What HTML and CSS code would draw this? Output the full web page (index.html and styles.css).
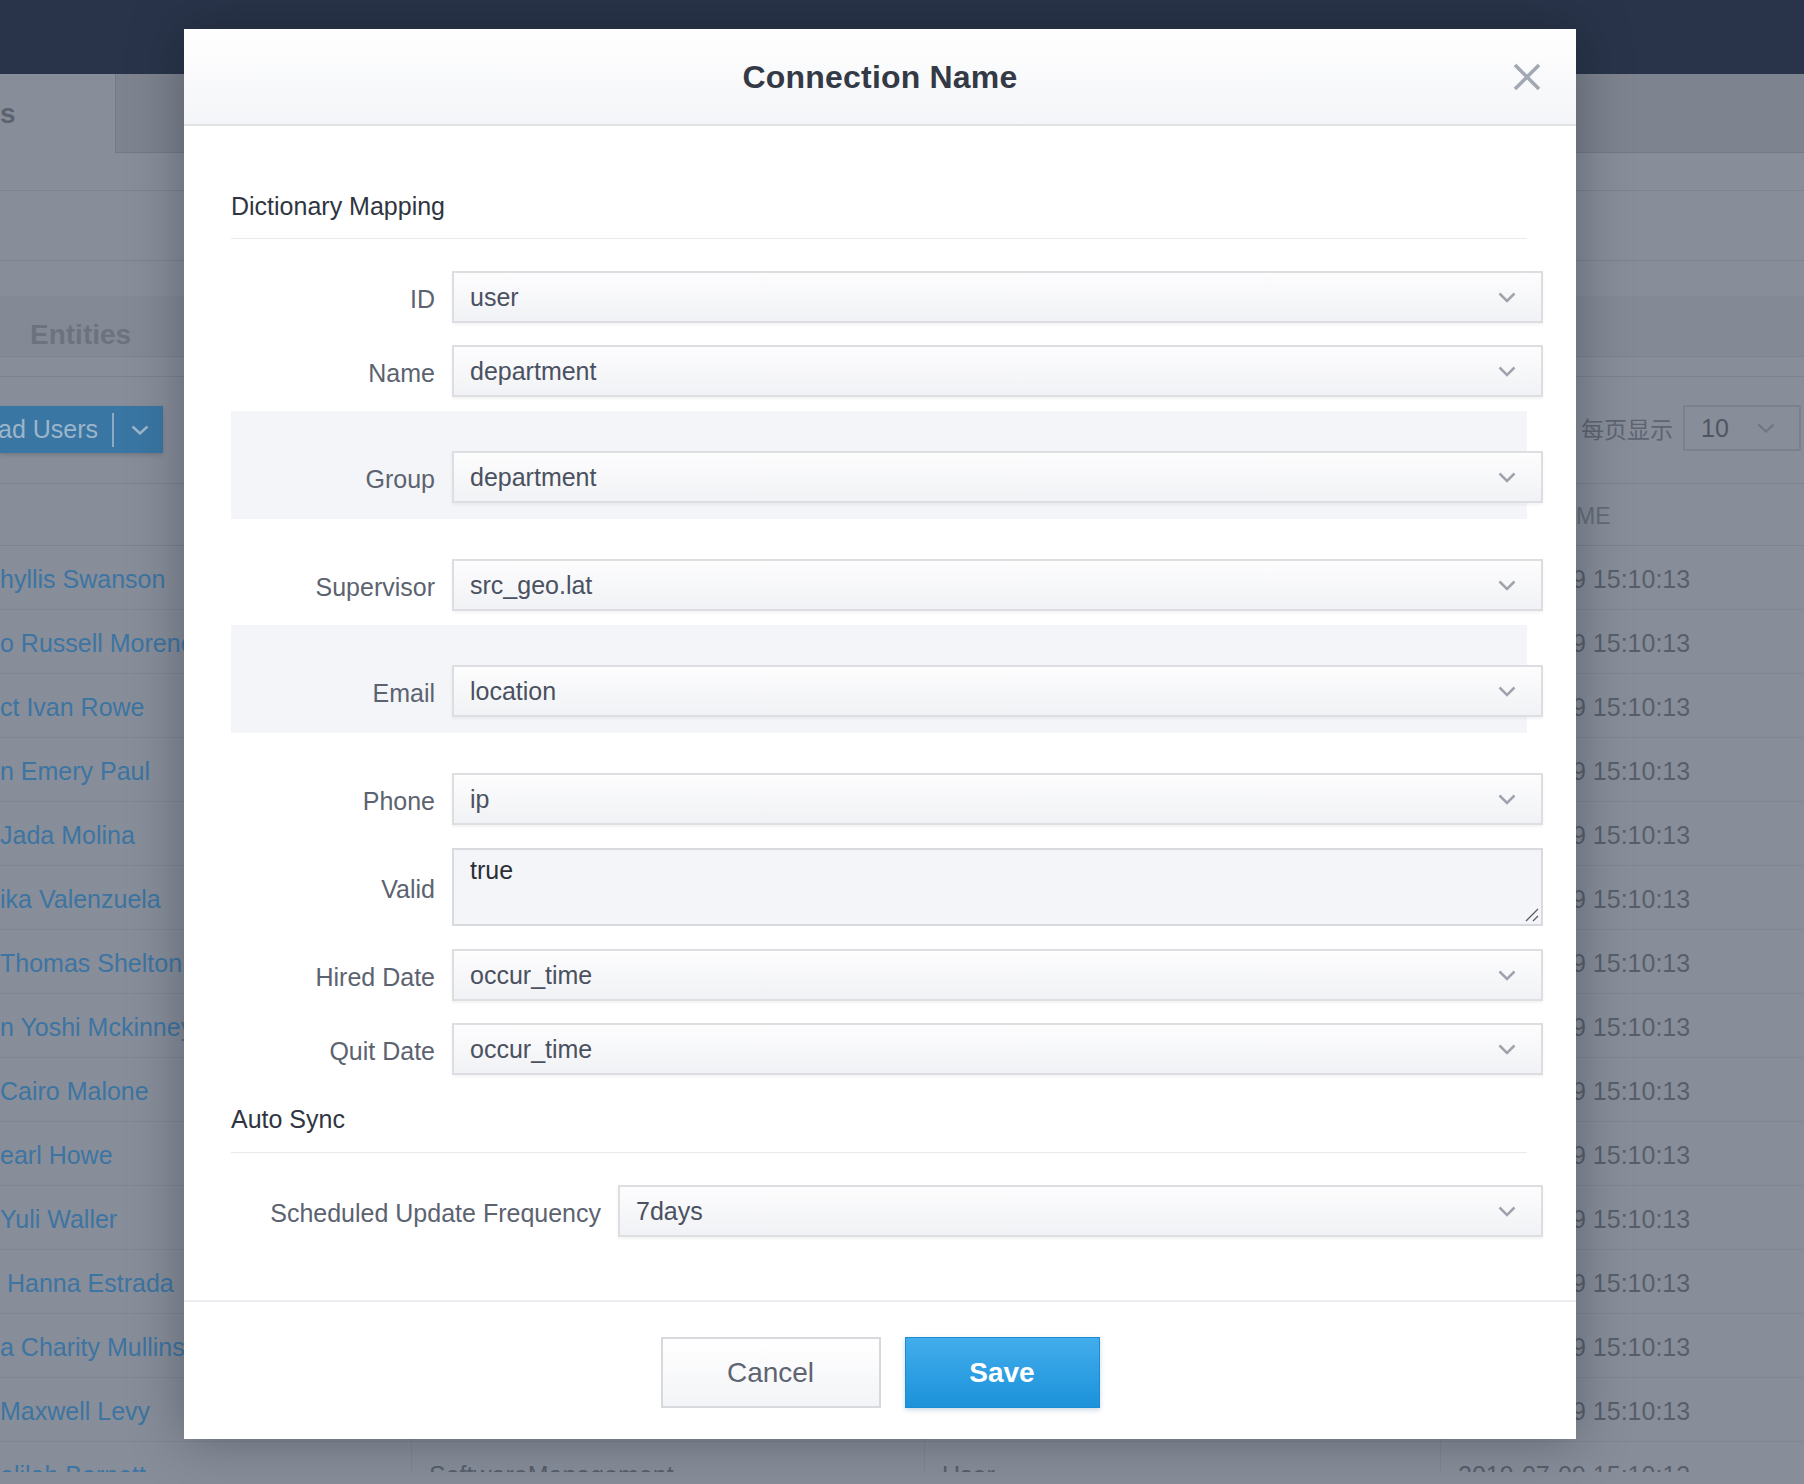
FILE: index.html
```html
<!DOCTYPE html>
<html>
<head>
<meta charset="utf-8">
<title>Connection Name</title>
<link rel="stylesheet" href="styles.css">
</head>
<body>
<div class="app">
  <div class="topbar"></div>
  <div class="tabs">
    <div class="tab-active">s</div>
    <div class="tab-rest"></div>
  </div>
  <div class="bar bar1"></div>
  <div class="bar bar2"></div>
  <div class="bar3"></div>
  <div class="subtabs"><span class="subtab">Entities</span></div>
  <div class="strip"></div>
  <div class="actions">
    <div class="btn-users">
      <span class="btn-users-text">ad Users</span>
      <span class="btn-sep"></span>
      <svg class="btn-chev" width="18" height="10" viewBox="0 0 18 10"><polyline points="1.5,1.5 9,8.5 16.5,1.5" fill="none" stroke="#9db6cb" stroke-width="2.4"/></svg>
    </div>
    <div class="pager">
      <span class="pager-label">每页显示</span>
      <div class="pager-select">
        <span>10</span>
        <svg width="18" height="10" viewBox="0 0 18 10"><polyline points="1.5,1.5 9,8.5 16.5,1.5" fill="none" stroke="#6f7682" stroke-width="2.2"/></svg>
      </div>
    </div>
  </div>
  <div class="table">
    <div class="thead">
      <div class="cell"></div><div class="cell"></div><div class="cell"></div><div class="cell th">CREATE TIME</div>
    </div>
    <div class="tr"><div class="cell name">hyllis Swanson</div><div class="cell"></div><div class="cell"></div><div class="cell">2019-07-09 15:10:13</div></div>
    <div class="tr"><div class="cell name">o Russell Moreno</div><div class="cell"></div><div class="cell"></div><div class="cell">2019-07-09 15:10:13</div></div>
    <div class="tr"><div class="cell name">ct Ivan Rowe</div><div class="cell"></div><div class="cell"></div><div class="cell">2019-07-09 15:10:13</div></div>
    <div class="tr"><div class="cell name">n Emery Paul</div><div class="cell"></div><div class="cell"></div><div class="cell">2019-07-09 15:10:13</div></div>
    <div class="tr"><div class="cell name">Jada Molina</div><div class="cell"></div><div class="cell"></div><div class="cell">2019-07-09 15:10:13</div></div>
    <div class="tr"><div class="cell name">ika Valenzuela</div><div class="cell"></div><div class="cell"></div><div class="cell">2019-07-09 15:10:13</div></div>
    <div class="tr"><div class="cell name">Thomas Shelton</div><div class="cell"></div><div class="cell"></div><div class="cell">2019-07-09 15:10:13</div></div>
    <div class="tr"><div class="cell name">n Yoshi Mckinney</div><div class="cell"></div><div class="cell"></div><div class="cell">2019-07-09 15:10:13</div></div>
    <div class="tr"><div class="cell name">Cairo Malone</div><div class="cell"></div><div class="cell"></div><div class="cell">2019-07-09 15:10:13</div></div>
    <div class="tr"><div class="cell name">earl Howe</div><div class="cell"></div><div class="cell"></div><div class="cell">2019-07-09 15:10:13</div></div>
    <div class="tr"><div class="cell name">Yuli Waller</div><div class="cell"></div><div class="cell"></div><div class="cell">2019-07-09 15:10:13</div></div>
    <div class="tr"><div class="cell name">&nbsp;Hanna Estrada</div><div class="cell"></div><div class="cell"></div><div class="cell">2019-07-09 15:10:13</div></div>
    <div class="tr"><div class="cell name">a Charity Mullins</div><div class="cell"></div><div class="cell"></div><div class="cell">2019-07-09 15:10:13</div></div>
    <div class="tr"><div class="cell name">Maxwell Levy</div><div class="cell"></div><div class="cell"></div><div class="cell">2019-07-09 15:10:13</div></div>
    <div class="tr"><div class="cell name">elilah Barnett</div><div class="cell">SoftwareManagement</div><div class="cell">User</div><div class="cell">2019-07-09 15:10:13</div></div>
  </div>
</div>

<div class="modal">
  <div class="modal-header">
    <span></span>
    <h1 class="modal-title">Connection Name</h1>
    <svg class="close" width="28" height="28" viewBox="0 0 28 28"><path d="M2 2 L26 26 M26 2 L2 26" stroke="#a3a9b2" stroke-width="3.6" fill="none"/></svg>
  </div>
  <div class="modal-body">
    <div class="section-title">Dictionary Mapping</div>

    <div class="row first">
      <label class="label">ID</label>
      <div class="select"><span>user</span><svg width="18" height="11" viewBox="0 0 18 11"><polyline points="1.5,1.5 9,9 16.5,1.5" fill="none" stroke="#9ea3ad" stroke-width="2.5"/></svg></div>
    </div>
    <div class="row">
      <label class="label">Name</label>
      <div class="select"><span>department</span><svg width="18" height="11" viewBox="0 0 18 11"><polyline points="1.5,1.5 9,9 16.5,1.5" fill="none" stroke="#9ea3ad" stroke-width="2.5"/></svg></div>
    </div>
    <div class="band">
      <div class="row">
        <label class="label">Group</label>
        <div class="select"><span>department</span><svg width="18" height="11" viewBox="0 0 18 11"><polyline points="1.5,1.5 9,9 16.5,1.5" fill="none" stroke="#9ea3ad" stroke-width="2.5"/></svg></div>
      </div>
    </div>
    <div class="row after-band">
      <label class="label">Supervisor</label>
      <div class="select"><span>src_geo.lat</span><svg width="18" height="11" viewBox="0 0 18 11"><polyline points="1.5,1.5 9,9 16.5,1.5" fill="none" stroke="#9ea3ad" stroke-width="2.5"/></svg></div>
    </div>
    <div class="band">
      <div class="row">
        <label class="label">Email</label>
        <div class="select"><span>location</span><svg width="18" height="11" viewBox="0 0 18 11"><polyline points="1.5,1.5 9,9 16.5,1.5" fill="none" stroke="#9ea3ad" stroke-width="2.5"/></svg></div>
      </div>
    </div>
    <div class="row after-band">
      <label class="label">Phone</label>
      <div class="select"><span>ip</span><svg width="18" height="11" viewBox="0 0 18 11"><polyline points="1.5,1.5 9,9 16.5,1.5" fill="none" stroke="#9ea3ad" stroke-width="2.5"/></svg></div>
    </div>
    <div class="row loose">
      <label class="label">Valid</label>
      <div class="textarea"><span>true</span><svg class="grip" width="14" height="14" viewBox="0 0 14 14"><path d="M1 13 L13 1 M8 13 L13 8" stroke="#5a5d63" stroke-width="1.3" fill="none"/></svg></div>
    </div>
    <div class="row loose">
      <label class="label">Hired Date</label>
      <div class="select"><span>occur_time</span><svg width="18" height="11" viewBox="0 0 18 11"><polyline points="1.5,1.5 9,9 16.5,1.5" fill="none" stroke="#9ea3ad" stroke-width="2.5"/></svg></div>
    </div>
    <div class="row">
      <label class="label">Quit Date</label>
      <div class="select"><span>occur_time</span><svg width="18" height="11" viewBox="0 0 18 11"><polyline points="1.5,1.5 9,9 16.5,1.5" fill="none" stroke="#9ea3ad" stroke-width="2.5"/></svg></div>
    </div>

    <div class="section-title second">Auto Sync</div>

    <div class="row first">
      <label class="label wide">Scheduled Update Frequency</label>
      <div class="select"><span>7days</span><svg width="18" height="11" viewBox="0 0 18 11"><polyline points="1.5,1.5 9,9 16.5,1.5" fill="none" stroke="#9ea3ad" stroke-width="2.5"/></svg></div>
    </div>
  </div>
  <div class="modal-footer">
    <button class="btn btn-cancel">Cancel</button>
    <button class="btn btn-save">Save</button>
  </div>
</div>
</body>
</html>
```

FILE: styles.css
```css
html, body {
  margin: 0;
  padding: 0;
}
body {
  width: 1804px;
  height: 1484px;
  overflow: hidden;
  position: relative;
  background: #878e9a;
  font-family: "Liberation Sans", Arial, sans-serif;
}

/* ---------- background application (dimmed) ---------- */
.app {
  width: 1804px;
}
.topbar {
  height: 74px;
  background: #29344a;
}
.tabs {
  height: 79px;
  display: flex;
}
.tab-active {
  width: 115px;
  font-size: 28px;
  font-weight: bold;
  color: #5c636f;
  line-height: 79px;
  overflow: hidden;
}
.tab-rest {
  flex: 1;
  background: #7d838f;
  border-left: 1px solid #737985;
  border-bottom: 1px solid #737985;
}
.bar {
  border-bottom: 1px solid #7c828e;
}
.bar1 { height: 37px; }
.bar2 { height: 69px; }
.bar3 { height: 35px; }
.subtabs {
  height: 61px;
  box-sizing: border-box;
  background: #838a96;
  border-bottom: 1px solid #7c828e;
  display: flex;
  align-items: center;
  padding: 18px 0 0 30px;
}
.subtab {
  font-size: 28px;
  font-weight: bold;
  color: #6c737f;
}
.strip {
  height: 19px;
  border-bottom: 1px solid #7c828e;
}
.actions {
  height: 106px;
  display: flex;
  justify-content: space-between;
  align-items: flex-start;
}
.btn-users {
  margin-top: 29px;
  height: 47px;
  width: 163px;
  box-sizing: border-box;
  background: #3a76a4;
  display: flex;
  align-items: center;
  color: #9cb5ca;
  font-size: 25px;
  box-shadow: 0 2px 4px rgba(0, 0, 0, 0.15);
}
.btn-users-text {
  margin-left: -2px;
  white-space: nowrap;
}
.btn-sep {
  width: 2px;
  height: 34px;
  background: #8eaac2;
  margin-left: 14px;
}
.btn-chev {
  margin-left: 17px;
}
.pager {
  margin-top: 28px;
  margin-right: 3px;
  display: flex;
  align-items: center;
}
.pager-label {
  font-family: "Noto Sans CJK SC", sans-serif;
  font-size: 23px;
  color: #5e6571;
  margin-right: 10px;
}
.pager-select {
  width: 118px;
  height: 46px;
  box-sizing: border-box;
  border: 2px solid #7a818d;
  display: flex;
  align-items: center;
  justify-content: space-between;
  padding: 0 24px 0 16px;
  font-size: 25px;
  color: #4f5662;
}
.table {
  width: 1804px;
  height: 989px;
  overflow: hidden;
}
.thead, .tr {
  display: grid;
  grid-template-columns: 411px 513px 516px 364px;
}
.thead {
  height: 61px;
  border-top: 1px solid #7c828e;
  border-bottom: 1px solid #7c828e;
}
.tr {
  height: 63px;
  border-bottom: 1px solid #7f8692;
}
.cell {
  display: flex;
  align-items: center;
  padding-left: 17px;
  padding-top: 3px;
  box-sizing: border-box;
  font-size: 25px;
  color: #585f6b;
  white-space: nowrap;
  overflow: hidden;
  border-left: 1px solid #7f8692;
}
.cell:first-child {
  border-left: none;
}
.cell.name {
  padding-left: 0;
  color: #3d74a1;
}
.cell.th {
  font-size: 23px;
  color: #666d79;
}

/* ---------- modal ---------- */
.modal {
  position: absolute;
  left: 184px;
  top: 29px;
  width: 1392px;
  height: 1410px;
  background: #ffffff;
  box-shadow: 0 0 50px rgba(15, 20, 30, 0.35);
  display: flex;
  flex-direction: column;
}
.modal-header {
  height: 95px;
  flex: none;
  border-bottom: 2px solid #dfe1e5;
  background: linear-gradient(#ffffff, #f4f5f8);
  display: grid;
  grid-template-columns: 1fr auto 1fr;
  align-items: center;
  padding: 0 35px;
}
.modal-title {
  margin: 0;
  padding-top: 2px;
  font-size: 32px;
  font-weight: bold;
  color: #343a45;
  letter-spacing: 0.2px;
}
.close {
  justify-self: end;
}
.modal-body {
  flex: 1;
  padding: 60px 33px 0 47px;
}
.section-title {
  font-size: 25px;
  line-height: 40px;
  color: #2f3541;
  padding-bottom: 12px;
  border-bottom: 1px solid #e8e9ec;
  margin-right: 16px;
}
.section-title.second {
  margin-top: 24px;
  padding-bottom: 13px;
}
.row {
  display: flex;
  align-items: center;
  margin-top: 22px;
}
.row.first {
  margin-top: 32px;
}
.row.loose {
  margin-top: 23px;
}
.row.after-band {
  margin-top: 40px;
}
.band {
  margin-top: 14px;
  margin-right: 16px;
  background: #f4f5f8;
  padding: 40px 0 16px;
}
.band .row {
  margin-top: 0;
  margin-right: -16px;
}
.label {
  width: 221px;
  flex: none;
  box-sizing: border-box;
  padding-right: 17px;
  padding-top: 5px;
  text-align: right;
  font-size: 25px;
  color: #5c6370;
  white-space: nowrap;
}
.label.wide {
  width: 387px;
}
.select {
  flex: 1;
  height: 52px;
  box-sizing: border-box;
  border: 2px solid #dcdee2;
  background: linear-gradient(#fdfdfe, #f1f2f5);
  box-shadow: 0 2px 3px rgba(0, 0, 0, 0.05);
  display: flex;
  align-items: center;
  justify-content: space-between;
  padding: 0 25px 0 16px;
  font-size: 25px;
  color: #4a5160;
}
.textarea {
  flex: 1;
  height: 78px;
  box-sizing: border-box;
  border: 2px solid #d8dadf;
  background: #f4f5f8;
  padding: 5px 2px 2px 16px;
  display: flex;
  flex-direction: column;
  font-size: 25px;
  line-height: 30px;
  color: #2b2f37;
}
.grip {
  align-self: flex-end;
  margin-top: auto;
}
.modal-footer {
  height: 139px;
  flex: none;
  border-top: 2px solid #ecedf0;
  display: flex;
  justify-content: center;
  align-items: flex-start;
  gap: 24px;
  padding-top: 35px;
  box-sizing: border-box;
}
.btn {
  height: 71px;
  box-sizing: border-box;
  font-family: "Liberation Sans", Arial, sans-serif;
  font-size: 28px;
  cursor: pointer;
}
.btn-cancel {
  width: 220px;
  border: 2px solid #d7d9dd;
  background: linear-gradient(#ffffff, #f3f4f7);
  color: #5e6571;
}
.btn-save {
  width: 195px;
  border: 1px solid #1c8cd2;
  background: linear-gradient(#42adec, #1c92da);
  color: #ffffff;
  font-weight: bold;
  box-shadow: 0 2px 5px rgba(0, 60, 120, 0.2);
}
```
